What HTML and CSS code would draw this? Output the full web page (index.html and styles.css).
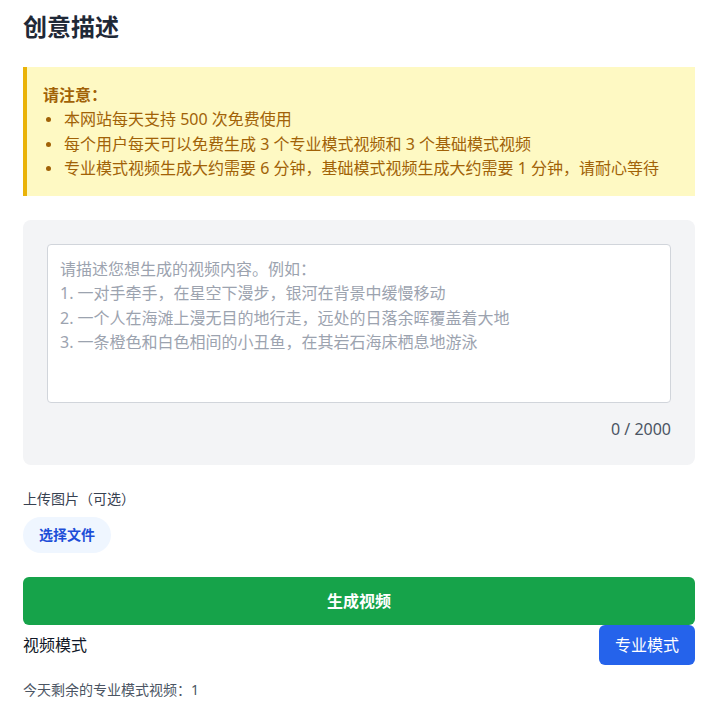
FILE: index.html
```html
<!DOCTYPE html>
<html lang="zh-CN">
<head>
<meta charset="utf-8">
<link rel="stylesheet" href="styles.css">
</head>
<body>
<div class="page">
  <h1 class="title">创意描述</h1>
  <div class="notice">
    <p class="notice-head">请注意：</p>
    <ul class="notice-list">
      <li>本网站每天支持 500 次免费使用</li>
      <li>每个用户每天可以免费生成 3 个专业模式视频和 3 个基础模式视频</li>
      <li>专业模式视频生成大约需要 6 分钟，基础模式视频生成大约需要 1 分钟，请耐心等待</li>
    </ul>
  </div>
  <div class="panel">
    <textarea class="prompt" placeholder="请描述您想生成的视频内容。例如：
1. 一对手牵手，在星空下漫步，银河在背景中缓慢移动
2. 一个人在海滩上漫无目的地行走，远处的日落余晖覆盖着大地
3. 一条橙色和白色相间的小丑鱼，在其岩石海床栖息地游泳"></textarea>
    <div class="counter">0 / 2000</div>
  </div>
  <div class="upload">
    <div class="upload-label">上传图片（可选）</div>
    <button class="file-btn">选择文件</button>
  </div>
  <button class="generate">生成视频</button>
  <div class="mode-row">
    <span class="mode-label">视频模式</span>
    <button class="mode-btn">专业模式</button>
  </div>
  <div class="remaining">今天剩余的专业模式视频：1</div>
</div>
</body>
</html>
```

FILE: styles.css
```css
* { box-sizing: border-box; }
html, body { margin: 0; padding: 0; background: #fff; }
body {
  font-family: "Noto Sans", "Noto Sans CJK SC", sans-serif;
  color: #111827;
}
.page {
  width: 672px;
  margin-left: 23px;
  padding-top: 11px;
}
.title {
  margin: 0;
  font-size: 24px;
  line-height: 32px;
  font-weight: 700;
  color: #1f2937;
}
.notice {
  margin-top: 24px;
  background: #fef9c3;
  border-left: 4px solid #eab308;
  padding: 16px;
  color: #a16207;
  font-size: 16px;
  line-height: 24.3px;
}
.notice-head {
  margin: 0;
  font-weight: 700;
}
.notice-list {
  margin: 0;
  padding-left: 21px;
  list-style: none;
}
.notice-list li {
  position: relative;
}
.notice-list li::before {
  content: "";
  position: absolute;
  left: -18px;
  top: 10px;
  width: 5px;
  height: 5px;
  border-radius: 50%;
  background: #a16207;
}
.panel {
  margin-top: 24px;
  background: #f3f4f6;
  border-radius: 8px;
  padding: 24px;
}
.prompt {
  display: block;
  width: 100%;
  height: 159px;
  border: 1px solid #d1d5db;
  border-radius: 4px;
  padding: 12px;
  font-family: inherit;
  font-size: 16px;
  line-height: 24.3px;
  resize: none;
  background: #fff;
  color: #111827;
}
.prompt::placeholder { color: #9ca3af; }
.counter {
  margin-top: 14px;
  text-align: right;
  font-size: 16px;
  line-height: 24px;
  color: #4b5563;
}
.upload { margin-top: 24px; }
.upload-label {
  font-size: 14px;
  line-height: 20px;
  color: #374151;
}
.file-btn {
  margin-top: 8px;
  border: none;
  border-radius: 9999px;
  background: #eff6ff;
  color: #1d4ed8;
  font-family: inherit;
  font-size: 14px;
  font-weight: 700;
  line-height: 20px;
  padding: 8px 16px;
}
.generate {
  display: block;
  width: 100%;
  margin-top: 24px;
  border: none;
  border-radius: 6px;
  background: #16a34a;
  color: #fff;
  font-family: inherit;
  font-size: 16px;
  font-weight: 700;
  line-height: 24px;
  padding: 12px;
}
.mode-row {
  display: flex;
  justify-content: space-between;
  align-items: center;
}
.mode-label {
  font-size: 16px;
  line-height: 24px;
  color: #111827;
}
.mode-btn {
  border: none;
  border-radius: 6px;
  background: #2563eb;
  color: #fff;
  font-family: inherit;
  font-size: 16px;
  line-height: 24px;
  padding: 8px 16px;
}
.remaining {
  margin-top: 15px;
  font-size: 14px;
  line-height: 20px;
  color: #4b5563;
}
```
